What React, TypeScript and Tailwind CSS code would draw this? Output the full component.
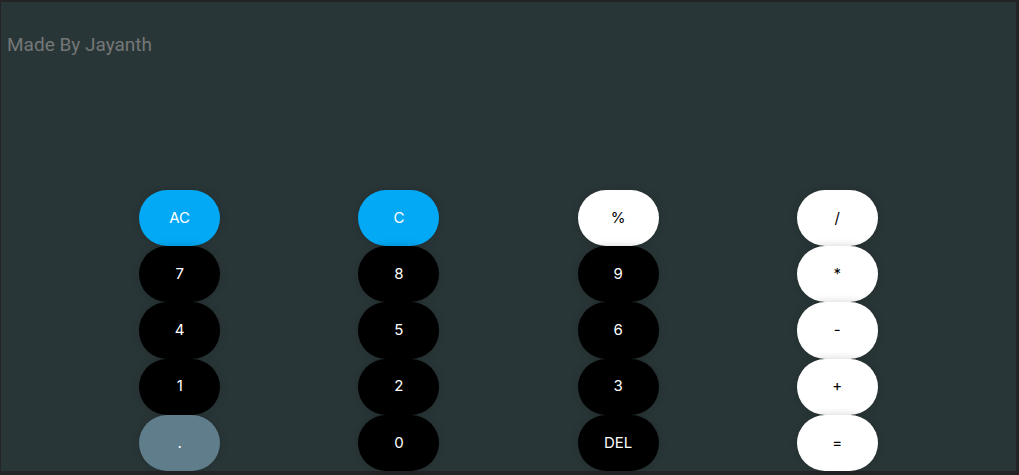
type Tone = "accent" | "digit" | "operator" | "muted";

type Key = { label: string; tone: Tone; name?: string };

const tones: Record<Tone, string> = {
  accent: "bg-[#03a9f4] text-white",
  digit: "bg-black text-white",
  operator: "bg-white text-black",
  muted: "bg-[#607d8b] text-white",
};

const rows: Key[][] = [
  [
    { label: "AC", tone: "accent", name: "All clear" },
    { label: "C", tone: "accent", name: "Clear" },
    { label: "%", tone: "operator", name: "Percent" },
    { label: "/", tone: "operator", name: "Divide" },
  ],
  [
    { label: "7", tone: "digit" },
    { label: "8", tone: "digit" },
    { label: "9", tone: "digit" },
    { label: "*", tone: "operator", name: "Multiply" },
  ],
  [
    { label: "4", tone: "digit" },
    { label: "5", tone: "digit" },
    { label: "6", tone: "digit" },
    { label: "-", tone: "operator", name: "Subtract" },
  ],
  [
    { label: "1", tone: "digit" },
    { label: "2", tone: "digit" },
    { label: "3", tone: "digit" },
    { label: "+", tone: "operator", name: "Add" },
  ],
  [
    { label: ".", tone: "muted", name: "Decimal point" },
    { label: "0", tone: "digit" },
    { label: "DEL", tone: "digit", name: "Delete" },
    { label: "=", tone: "operator", name: "Equals" },
  ],
];

function KeyButton({ label, tone, name }: Key) {
  return (
    <button
      type="button"
      aria-label={name}
      className={`h-full w-[81px] rounded-[28px] text-[15px] shadow-[0_0_8px_0_rgba(0,0,0,0.18)] ${tones[tone]}`}
    >
      {label}
    </button>
  );
}

export default function App() {
  return (
    <main className="flex min-h-screen flex-col border-t-2 border-r-3 border-b-4 border-l border-[#242426] bg-[#293637]">
      <header className="flex-1 px-1.5 pt-[29px] font-['Roboto',sans-serif] text-[19px] leading-7 text-[#757777]">
        <h1>Made By Jayanth</h1>
      </header>
      <section
        aria-label="Keypad"
        className="grid h-[281px] grid-rows-5 font-['Inter',sans-serif]"
      >
        {rows.map((row, index) => (
          <div key={index} className="flex justify-evenly">
            {row.map((key) => (
              <KeyButton key={key.label} {...key} />
            ))}
          </div>
        ))}
      </section>
    </main>
  );
}
